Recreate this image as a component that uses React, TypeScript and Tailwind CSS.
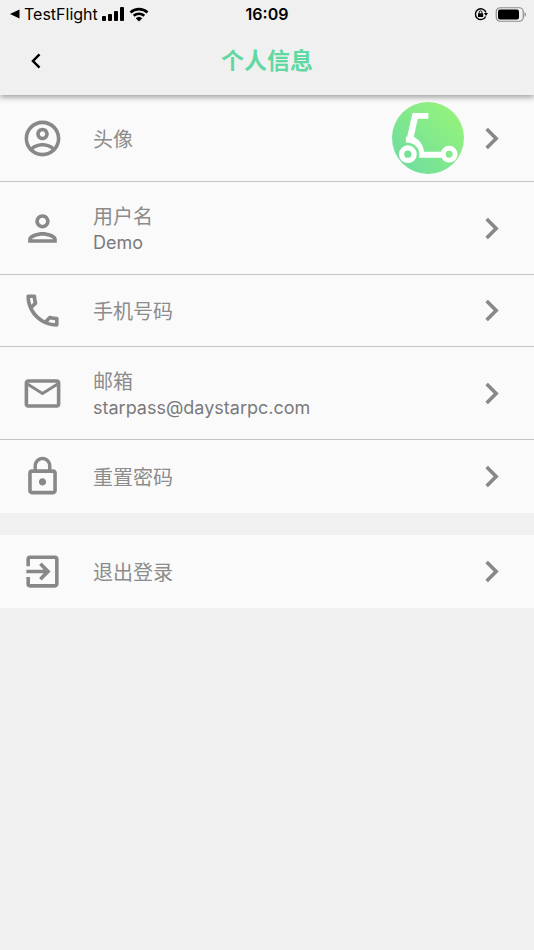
import type { ReactNode } from 'react'
import { MdOutlinePhone, MdMailOutline, MdLockOutline, MdExitToApp, MdChevronRight } from 'react-icons/md'

const iconClass = 'h-[43px] w-[43px] shrink-0 text-[#888888]'

function AccountIcon() {
  return (
    <svg viewBox="0 0 24 24" fill="currentColor" className={iconClass} aria-hidden="true">
      <path d="M12 2C6.48 2 2 6.48 2 12s4.48 10 10 10 10-4.48 10-10S17.52 2 12 2zM7.07 18.28c.43-.9 3.05-1.78 4.93-1.78s4.51.88 4.93 1.78C15.57 19.36 13.86 20 12 20s-3.57-.64-4.93-1.72zm11.29-1.45c-1.43-1.74-4.9-2.33-6.36-2.33s-4.93.59-6.36 2.33C4.62 15.49 4 13.82 4 12c0-4.41 3.59-8 8-8s8 3.59 8 8c0 1.82-.62 3.49-1.64 4.83zM12 6c-1.94 0-3.5 1.56-3.5 3.5S10.06 13 12 13s3.5-1.56 3.5-3.5S13.94 6 12 6zm0 5c-.83 0-1.5-.67-1.5-1.5S11.17 8 12 8s1.5.67 1.5 1.5S12.83 11 12 11z" />
    </svg>
  )
}

function PersonIcon() {
  return (
    <svg viewBox="0 0 24 24" fill="currentColor" className={iconClass} aria-hidden="true">
      <path d="M12 6c1.1 0 2 .9 2 2s-.9 2-2 2-2-.9-2-2 .9-2 2-2m0 10c2.7 0 5.8 1.29 6 2H6c.23-.72 3.31-2 6-2m0-12C9.79 4 8 5.79 8 8s1.79 4 4 4 4-1.79 4-4-1.79-4-4-4zm0 10c-2.67 0-8 1.34-8 4v2h16v-2c0-2.66-5.33-4-8-4z" />
    </svg>
  )
}

function ScooterAvatar() {
  return (
    <svg viewBox="0 0 218 218" className="h-[72px] w-[72px] shrink-0" role="img" aria-label="头像">
      <defs>
        <linearGradient id="avatar" x1="0.15" y1="0.85" x2="0.85" y2="0.15">
          <stop offset="0" stopColor="#71df9c" />
          <stop offset="1" stopColor="#93f27d" />
        </linearGradient>
      </defs>
      <circle cx="109" cy="109" r="109" fill="url(#avatar)" />
      <path
        d="M62 33h48v18H78L66 106c17 8 29 24 31 45h58v18H82c5-25-10-46-40-46v-18h4z"
        fill="#fff"
      />
      <circle cx="48" cy="158" r="19" fill="none" stroke="#fff" strokeWidth="16" />
      <circle cx="173" cy="158" r="18" fill="#85e98a" stroke="#fff" strokeWidth="15" />
    </svg>
  )
}

type Item = { label: string; value?: string; icon: ReactNode; avatar?: boolean; height: string }

const profileItems: Item[] = [
  { label: '头像', icon: <AccountIcon />, avatar: true, height: 'min-h-[86px]' },
  { label: '用户名', value: 'Demo', icon: <PersonIcon />, height: 'min-h-[92px]' },
  { label: '手机号码', icon: <MdOutlinePhone className={iconClass} />, height: 'min-h-[71px]' },
  { label: '邮箱', value: 'starpass@daystarpc.com', icon: <MdMailOutline className={iconClass} />, height: 'min-h-[92px]' },
  { label: '重置密码', icon: <MdLockOutline className={iconClass} />, height: 'min-h-[73px]' },
]

const sessionItems: Item[] = [
  { label: '退出登录', icon: <MdExitToApp className={iconClass} />, height: 'min-h-[73px]' },
]

function ItemList({ items }: { items: Item[] }) {
  return (
    <ul className="divide-y divide-[#c4c4c6] bg-[#fafafa]">
      {items.map((item) => (
        <li key={item.label}>
          <button type="button" className={`flex w-full items-center px-[21px] text-left ${item.height}`}>
            {item.icon}
            <span className="ml-[29px] flex flex-1 flex-col pt-[3px]">
              <span className="text-[20px] leading-[26px] text-[#8c8c8c]">{item.label}</span>
              {item.value && <span className="text-[18px] leading-[26px] text-[#7a7a7a]">{item.value}</span>}
            </span>
            {item.avatar && <ScooterAvatar />}
            <MdChevronRight className="ml-[6px] h-[43px] w-[43px] shrink-0 text-[#888888]" />
          </button>
        </li>
      ))}
    </ul>
  )
}

function StatusBar() {
  return (
    <div className="grid h-7 grid-cols-3 items-center px-2 text-[16px] leading-5 text-black">
      <div className="flex items-center gap-1">
        <svg viewBox="0 0 12 10" className="h-[10px] w-3" aria-hidden="true">
          <path d="M2 5 11.500 .5v9z" />
        </svg>
        <span>TestFlight</span>
        <svg viewBox="0 0 23 14" className="h-[14px] w-[23px]" aria-hidden="true">
          <rect x="0" y="9" width="4" height="5" rx="1" />
          <rect x="6" y="7" width="4" height="7" rx="1" />
          <rect x="12" y="4" width="4" height="10" rx="1" />
          <rect x="18" y="0" width="4" height="14" rx="1" />
        </svg>
        <svg viewBox="0 0 20 15" className="h-[15px] w-5 shrink-0" aria-hidden="true">
          <path d="M1.500 5.500a12.500 12.500 0 0 1 17 0M4.700 8.700a8 8 0 0 1 10.600 0" fill="none" stroke="#000" strokeWidth="2.600" />
          <path d="M10 14.600 6.700 11.300a4.800 4.800 0 0 1 6.600 0z" />
        </svg>
      </div>
      <span className="text-center font-semibold">16:09</span>
      <div className="flex items-center justify-end gap-[7px]">
        <svg viewBox="0 0 14 14" className="h-[14px] w-[14px]" aria-hidden="true">
          <path d="M11.700 9.500A5.400 5.400 0 1 1 12 5.500" fill="none" stroke="#000" strokeWidth="1.400" />
          <path d="M9.900 6h4.100l-2 2.900z" />
          <rect x="4" y="6.300" width="5.200" height="3.700" rx=".5" />
          <path d="M5.200 6.500V5.300a1.400 1.400 0 0 1 2.800 0v1.200" fill="none" stroke="#000" />
        </svg>
        <svg viewBox="0 0 31 15" className="h-[15px] w-[31px]" aria-hidden="true">
          <rect x="1.250" y=".75" width="27" height="13.500" rx="4" fill="none" stroke="#8c8c8c" strokeWidth="1.200" />
          <rect x="3" y="2.500" width="21" height="10" rx="2" />
          <path d="M29.500 5.200c2 .8 2 3.800 0 4.600z" fill="#8c8c8c" />
        </svg>
      </div>
    </div>
  )
}

export default function App() {
  return (
    <div className="min-h-screen bg-[#f0f0f0] font-[Inter,'Noto_Sans_CJK_SC',sans-serif]">
      <header className="relative z-10 bg-[#f0f0f0] shadow-[0_2px_6px_rgba(0,0,0,0.4)]">
        <StatusBar />
        <div className="grid h-[67px] grid-cols-[72px_1fr_72px] items-center pb-[2px]">
          <button type="button" aria-label="返回" className="flex h-full items-center justify-center">
            <svg viewBox="0 0 10 16" className="h-4 w-[10px]" aria-hidden="true">
              <path d="M8.500 1.300 2 8l6.500 6.700" fill="none" stroke="#000" strokeWidth="2.500" />
            </svg>
          </button>
          <h1 className="text-center text-[23px] leading-8 font-bold text-[#60d8a1]">个人信息</h1>
        </div>
      </header>
      <main className="flex flex-col gap-[22px]">
        <ItemList items={profileItems} />
        <ItemList items={sessionItems} />
      </main>
    </div>
  )
}
